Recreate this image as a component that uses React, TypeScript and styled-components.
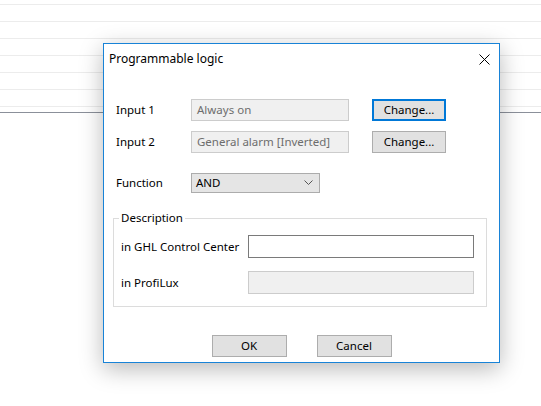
import React from "react";
import styled, { createGlobalStyle } from "styled-components";

const Global = createGlobalStyle`
  html, body { margin: 0; padding: 0; background: #ffffff; }
  body {
    font-family: "Noto Sans", "Segoe UI", sans-serif;
    font-size: 11.5px;
    color: #000;
  }
  * { box-sizing: border-box; }
`;

const Page = styled.div`
  position: relative;
  width: 541px;
  height: 406px;
  overflow: hidden;
  background: #fff;
`;

const ListArea = styled.div`
  display: flex;
  flex-direction: column;
  padding-top: 4px;
`;

const ListRow = styled.div<{ $h?: number }>`
  height: ${(p) => p.$h ?? 17}px;
  border-top: 1px solid #ececec;
`;

const Divider = styled.div`
  height: 1px;
  background: #8b909a;
`;

const Dialog = styled.div`
  position: absolute;
  left: 103px;
  top: 43px;
  width: 397px;
  height: 320px;
  background: #fff;
  border: 1px solid #1883d7;
  box-shadow: 0 6px 22px rgba(0, 0, 0, 0.28);
  display: flex;
  flex-direction: column;
`;

const TitleBar = styled.div`
  height: 29px;
  display: flex;
  align-items: center;
  justify-content: space-between;
  padding-left: 5px;
`;

const Title = styled.div`
  font-size: 12px;
  line-height: 16px;
`;

const CloseButton = styled.div`
  width: 30px;
  height: 29px;
  display: flex;
  align-items: center;
  justify-content: center;
  padding-top: 1px;
`;

const Body = styled.div`
  display: flex;
  flex-direction: column;
  padding: 26px 12px 0 12px;
`;

const FormGrid = styled.div`
  display: grid;
  grid-template-columns: 75px 158px 97px;
  align-items: center;
`;

const Label = styled.div`
  line-height: 16px;
`;

const ReadOnlyBox = styled.div`
  height: 22px;
  background: #f0f0f0;
  border: 1px solid #cccccc;
  color: #6d6d6d;
  padding: 0 5px;
  line-height: 19px;
  white-space: nowrap;
  overflow: hidden;
`;

const PushButton = styled.div<{ $focused?: boolean }>`
  height: 22px;
  width: 74px;
  justify-self: end;
  background: #e1e1e1;
  border: ${(p) => (p.$focused ? "2px solid #0078d7" : "1px solid #adadad")};
  display: flex;
  align-items: center;
  justify-content: center;
  line-height: 16px;
  padding-bottom: 1px;
`;

const Spacer = styled.div<{ $h: number }>`
  height: ${(p) => p.$h}px;
  grid-column: 1 / -1;
`;

const Select = styled.div`
  width: 129px;
  height: 20px;
  background: #e5e5e5;
  border: 1px solid #acacac;
  display: flex;
  align-items: center;
  justify-content: space-between;
  padding: 0 6px 0 4px;
  line-height: 16px;
`;

const Group = styled.fieldset`
  margin: 17px 1px 0 -3px;
  padding: 9px 12px 12px 7px;
  border: 1px solid #dcdcdc;
  display: grid;
  grid-template-columns: 127px 226px;
  row-gap: 13px;
  align-items: center;
`;

const Legend = styled.legend`
  padding: 0 2px;
  margin-left: -2px;
  line-height: 16px;
`;

const TextBox = styled.div<{ $disabled?: boolean }>`
  height: 23px;
  background: ${(p) => (p.$disabled ? "#f0f0f0" : "#ffffff")};
  border: 1px solid ${(p) => (p.$disabled ? "#cccccc" : "#7a7a7a")};
`;

const ButtonRow = styled.div`
  display: flex;
  justify-content: center;
  gap: 30px;
  margin-top: 28px;
  margin-left: -12px;
  margin-right: -12px;
`;

const DialogButton = styled(PushButton)`
  width: 75px;
`;

const Chevron = () => (
  <svg width="9" height="6" viewBox="0 0 9 6">
    <polyline points="0.5,0.5 4.5,4.5 8.5,0.5" fill="none" stroke="#555" strokeWidth="1" />
  </svg>
);

const CloseIcon = () => (
  <svg width="11" height="11" viewBox="0 0 11 11">
    <line x1="0.5" y1="0.5" x2="10.5" y2="10.5" stroke="#000" strokeWidth="1" />
    <line x1="10.5" y1="0.5" x2="0.5" y2="10.5" stroke="#000" strokeWidth="1" />
  </svg>
);

export default function App() {
  return (
    <Page>
      <Global />
      <ListArea>
        {[0, 1, 2, 3, 4, 5].map((i) => (
          <ListRow key={i} />
        ))}
        <ListRow $h={6} />
        <Divider />
      </ListArea>

      <Dialog>
        <TitleBar>
          <Title>Programmable logic</Title>
          <CloseButton>
            <CloseIcon />
          </CloseButton>
        </TitleBar>
        <Body>
          <FormGrid>
            <Label>Input 1</Label>
            <ReadOnlyBox>Always on</ReadOnlyBox>
            <PushButton $focused>Change...</PushButton>
            <Spacer $h={10} />
            <Label>Input 2</Label>
            <ReadOnlyBox>General alarm [Inverted]</ReadOnlyBox>
            <PushButton>Change...</PushButton>
            <Spacer $h={20} />
            <Label>Function</Label>
            <Select>
              <span>AND</span>
              <Chevron />
            </Select>
          </FormGrid>
          <Group>
            <Legend>Description</Legend>
            <Label>in GHL Control Center</Label>
            <TextBox />
            <Label>in ProfiLux</Label>
            <TextBox $disabled />
          </Group>
          <ButtonRow>
            <DialogButton>OK</DialogButton>
            <DialogButton>Cancel</DialogButton>
          </ButtonRow>
        </Body>
      </Dialog>
    </Page>
  );
}
